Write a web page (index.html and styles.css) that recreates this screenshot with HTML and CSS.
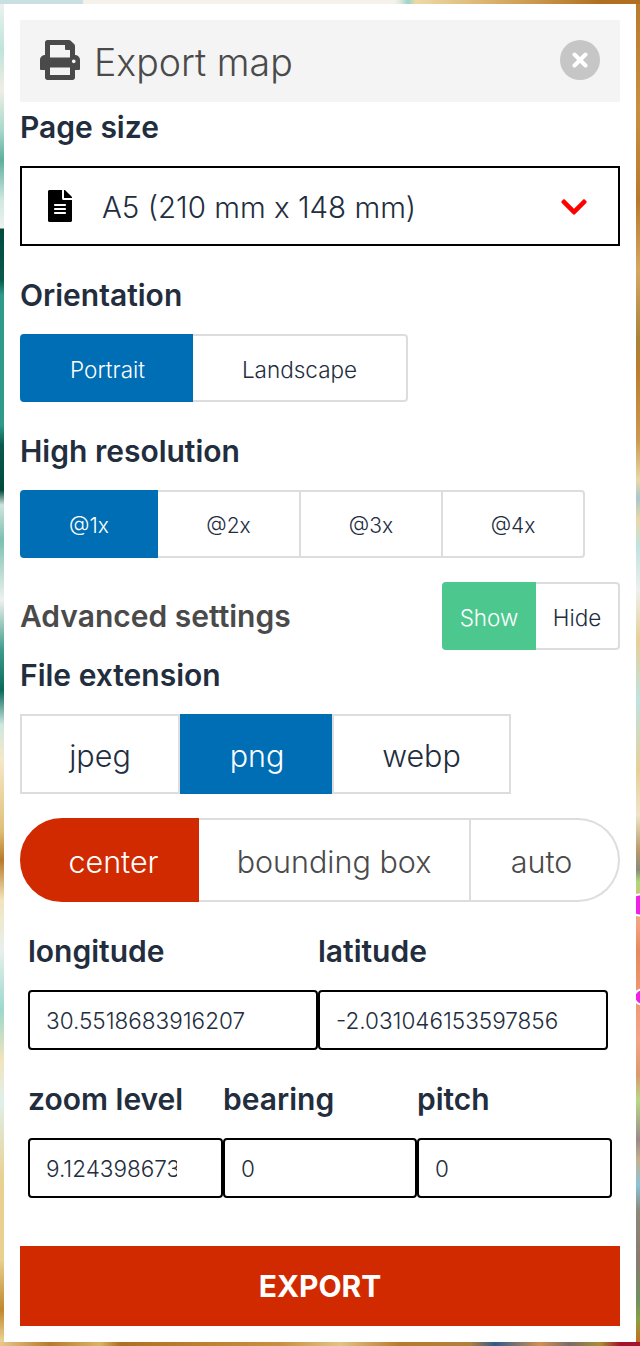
FILE: index.html
```html
<!DOCTYPE HTML>
<html lang="en">

<head>
    <meta charset="utf-8">
    <meta name="viewport" content="width=device-width, initial-scale=1">
    <title>Export map</title>
    <link rel="stylesheet" href="styles.css">
</head>

<body>
    <div class="panel">
        <div class="header">
            <svg class="printer" viewBox="0 0 512 512">
                <path d="M448 192V77.25c0-8.49-3.37-16.62-9.37-22.63L393.37 9.37c-6-6-14.14-9.37-22.63-9.37H96C78.33 0 64 14.33 64 32v160c-35.35 0-64 28.65-64 64v112c0 8.84 7.16 16 16 16h48v96c0 17.67 14.33 32 32 32h320c17.67 0 32-14.33 32-32v-96h48c8.84 0 16-7.16 16-16V256c0-35.35-28.65-64-64-64zm-64 256H128v-96h256v96zm0-224H128V64h192v48c0 8.84 7.16 16 16 16h48v96zm48 72c-13.25 0-24-10.75-24-24 0-13.26 10.75-24 24-24s24 10.74 24 24c0 13.25-10.75 24-24 24z"/>
            </svg>
            <span class="title">Export map</span>
            <button class="close" aria-label="Close">
                <svg viewBox="0 0 16 16"><path d="M2.5 2.5l11 11M13.5 2.5l-11 11"/></svg>
            </button>
        </div>

        <div class="label">Page size</div>
        <div class="select">
            <svg class="file-icon" viewBox="0 0 384 512">
                <path d="M224 136V0H24C10.7 0 0 10.7 0 24v464c0 13.3 10.7 24 24 24h336c13.3 0 24-10.7 24-24V160H248c-13.2 0-24-10.8-24-24zm64 236c0 6.6-5.4 12-12 12H108c-6.6 0-12-5.4-12-12v-8c0-6.6 5.4-12 12-12h168c6.6 0 12 5.4 12 12v8zm0-64c0 6.6-5.4 12-12 12H108c-6.6 0-12-5.4-12-12v-8c0-6.6 5.4-12 12-12h168c6.6 0 12 5.4 12 12v8zm0-72v8c0 6.6-5.4 12-12 12H108c-6.6 0-12-5.4-12-12v-8c0-6.6 5.4-12 12-12h168c6.6 0 12 5.4 12 12zm96-114.1v6.1H256V0h6.1c6.4 0 12.5 2.5 17 7l97.9 98c4.5 4.5 7 10.6 7 16.9z"/>
            </svg>
            <span class="select-text">A5 (210 mm x 148 mm)</span>
            <svg class="chevron" viewBox="0 0 448 512">
                <path d="M207.029 381.476L12.686 187.132c-9.373-9.373-9.373-24.569 0-33.941l22.667-22.667c9.357-9.357 24.522-9.375 33.901-.04L224 284.505l154.745-154.021c9.379-9.335 24.544-9.317 33.901.04l22.667 22.667c9.373 9.373 9.373 24.569 0 33.941L240.971 381.476c-9.373 9.372-24.569 9.372-33.942 0z"/>
            </svg>
        </div>

        <div class="label gap">Orientation</div>
        <div class="group orientation">
            <button class="active">Portrait</button>
            <button>Landscape</button>
        </div>

        <div class="label gap">High resolution</div>
        <div class="group resolution">
            <button class="active">@1x</button>
            <button>@2x</button>
            <button>@3x</button>
            <button>@4x</button>
        </div>

        <div class="advanced">
            <span class="advanced-title">Advanced settings</span>
            <div class="group toggle">
                <button class="active">Show</button>
                <button>Hide</button>
            </div>
        </div>

        <div class="label">File extension</div>
        <div class="group large extension">
            <button>jpeg</button>
            <button class="active">png</button>
            <button>webp</button>
        </div>

        <div class="group large pill">
            <button class="active">center</button>
            <button>bounding box</button>
            <button>auto</button>
        </div>

        <div class="fields two">
            <label class="label gap" for="lng">longitude</label>
            <label class="label gap" for="lat">latitude</label>
            <input id="lng" type="text" value="30.5518683916207">
            <input id="lat" type="text" value="-2.031046153597856">
        </div>

        <div class="fields three">
            <label class="label gap" for="zoom">zoom level</label>
            <label class="label gap" for="bearing">bearing</label>
            <label class="label gap" for="pitch">pitch</label>
            <input id="zoom" type="text" value="9.124398673">
            <input id="bearing" type="text" value="0">
            <input id="pitch" type="text" value="0">
        </div>

        <button class="export">EXPORT</button>
    </div>
</body>

</html>
```

FILE: styles.css
```css
* {
    box-sizing: border-box;
}

body {
    margin: 0;
    padding: 4px;
    font-family: Inter, Lato, sans-serif;
    color: #222d3e;
    /* map behind the panel, only its edges show */
    background-color: #e6c890;
    background-image:
        radial-gradient(circle at 640px 905px, #f020e8 0, #f020e8 9px, #fff 10px, #fff 11px, transparent 12px),
        radial-gradient(circle at 642px 997px, #f020e8 0, #f020e8 6px, #fff 7px, #fff 8px, transparent 9px),
        radial-gradient(circle at 632px 1350px, #a5122e 0, #a5122e 9px, transparent 10px),
        linear-gradient(90deg, #cadfe2 0, #cadfe2 82px, #f5f2ec 84px, #f5f2ec 394px, #e0e8dc 400px, #9cd4c8 408px, #ecd9a8 416px, #e0bd7c 470px, #c8954a 540px, #b06f20 600px, #b06f20 640px),
        linear-gradient(90deg, #e6c88c 0, #b87a2a 50px, #d8b468 100px, #b06f20 120px, #c8903e 280px, #e0c484 340px, #b87a2a 400px, #b0803c 470px, #2f5a8a 495px, #d09050 540px, #7a6a6a 570px, #a89030 600px, #a5122e 620px, #a5122e 640px),
        linear-gradient(180deg, #b87a2a 0, #c8903e 110px, #b87a2a 200px, #d4a860 270px, #a98238 340px, #bb7d2e 370px, #cb9a4e 440px, #e8d8a8 480px, #a8c8cc 498px, #e8d8a8 520px, #bfe3df 545px, #eef0ec 590px, #e6cf98 640px, #bfe3df 700px, #e6cf98 770px, #efe4c8 815px, #b89a6c 850px, #8a8a7a 870px, #b0d878 882px, #f4a080 925px, #e68a5c 950px, #f4a488 1040px, #d89a6c 1075px, #b8d888 1100px, #9a8a8a 1140px, #c4b090 1160px, #88c4d8 1185px, #8a8a7a 1210px, #8a7a70 1260px, #6f9060 1300px, #8aa040 1320px, #c07020 1340px),
        linear-gradient(180deg, #eef4f0 0, #bfe3db 50px, #f0eee4 90px, #a8d8cc 130px, #5fae9e 160px, #cfe8e0 200px, #eef2ee 228px, #004a3c 229px, #0a5a4c 280px, #2f9a8a 295px, #2f9a8a 425px, #0a5a4c 445px, #004a3c 490px, #cfe4de 505px, #7cc0b0 540px, #eef2ee 600px, #3f9c8c 650px, #0a6a5a 690px, #cfe8e0 725px, #f5e8c8 760px, #e0c078 830px, #b87a2a 860px, #f2e4bc 900px, #e8f0ec 950px, #9cd8cc 1010px, #f2e4bc 1060px, #dff0ea 1100px, #e8d090 1180px, #e8d090 1260px, #c0882c 1310px, #e8d090 1340px);
    background-repeat: no-repeat;
    background-size: 100% 100%, 100% 100%, 100% 100%, 100% 4px, 100% 4px, 4px 100%, 4px 100%;
    background-position: 0 0, 0 0, 0 0, 0 0, 0 100%, 100% 0, 0 0;
}

.panel {
    background-color: white;
    padding: 16px;
    min-height: 1338px;
}

.header {
    display: flex;
    align-items: center;
    height: 82px;
    padding: 0 20px;
    background-color: #f4f4f4;
}

.printer {
    width: 40px;
    height: 40px;
    fill: #4a4a4a;
    margin-top: -2px;
}

.title {
    margin: 2px 0 0 14px;
    font-size: 37.5px;
    font-weight: 300;
    color: #4a4a4a;
}

.close {
    width: 40px;
    height: 40px;
    margin: -2px 0 0 auto;
    padding: 12px;
    border: none;
    border-radius: 50%;
    background-color: #c6c6c6;
}

.close svg {
    display: block;
    fill: none;
    stroke: white;
    stroke-width: 4;
    stroke-linecap: round;
}

.label {
    display: block;
    height: 50px;
    margin-bottom: 14px;
    line-height: 50px;
    font-size: 30px;
    font-weight: 600;
}

.label.gap {
    margin-top: 24px;
}

.select {
    display: flex;
    align-items: center;
    height: 80px;
    padding: 0 31px 0 26px;
    border: 2px solid black;
}

.file-icon {
    width: 24px;
    height: 32px;
    fill: black;
}

.select-text {
    margin: 2px 0 0 30px;
    font-size: 29.5px;
    font-weight: 300;
}

.chevron {
    width: 26px;
    height: 30px;
    margin: 2px 0 0 auto;
    fill: #ff0000;
}

.group {
    display: grid;
    height: 68px;
}

.group button {
    border: 2px solid #ddd;
    border-left-width: 0;
    background-color: white;
    color: #222d3e;
    font-family: inherit;
    font-size: 22.5px;
    font-weight: 300;
    padding: 2px 0 0;
}

.group button:first-child {
    border-left-width: 2px;
    border-radius: 4px 0 0 4px;
}

.group button:last-child {
    border-radius: 0 4px 4px 0;
}

.group button.active {
    background-color: #006eb5;
    border-color: #006eb5;
    color: white;
}

.orientation {
    grid-template-columns: 173px 215px;
}

.orientation button.active {
    padding-left: 2px;
}

.resolution {
    grid-template-columns: 138px 143px 142px 142px;
}

.resolution button {
    font-size: 21px;
}

.advanced {
    display: flex;
    justify-content: space-between;
    align-items: center;
    margin-top: 24px;
}

.advanced-title {
    font-size: 30px;
    font-weight: 600;
    color: #4a4a4a;
}

.toggle {
    grid-template-columns: 94px 84px;
}

.toggle button.active {
    background-color: #4cc88f;
    border-color: #4cc88f;
}

.group.large {
    height: 80px;
}

.group.large button {
    font-size: 30.5px;
    border-radius: 0;
}

.extension {
    grid-template-columns: 160px 152px 179px;
}

.extension button.active {
    padding-left: 4px;
}

.group.extension button:last-child {
    border-left-width: 2px;
}

.group.pill {
    height: 84px;
    margin-top: 24px;
    grid-template-columns: 179px 272px 149px;
}

.group.pill button {
    color: #4a4a4a;
}

.group.pill button:first-child {
    border-radius: 42px 0 0 42px;
    padding-left: 8px;
}

.group.pill button:last-child {
    border-radius: 0 42px 42px 0;
    padding-right: 6px;
}

.group.pill button.active {
    background-color: #d22a00;
    border-color: #d22a00;
    color: white;
}

.fields {
    display: grid;
    padding-left: 8px;
}

.two {
    grid-template-columns: 290px 290px;
}

.three {
    grid-template-columns: 195px 194px 195px;
}

.fields input {
    width: 100%;
    height: 60px;
    padding: 0 44px 0 16px;
    border: 2px solid black;
    border-radius: 4px;
    outline: none;
    font-family: inherit;
    font-size: 22.5px;
    font-weight: 300;
    color: #222d3e;
}

.export {
    display: block;
    width: 100%;
    height: 80px;
    margin-top: 48px;
    border: none;
    background-color: #d22a00;
    color: white;
    font-family: inherit;
    font-size: 30px;
    font-weight: 700;
}
```
